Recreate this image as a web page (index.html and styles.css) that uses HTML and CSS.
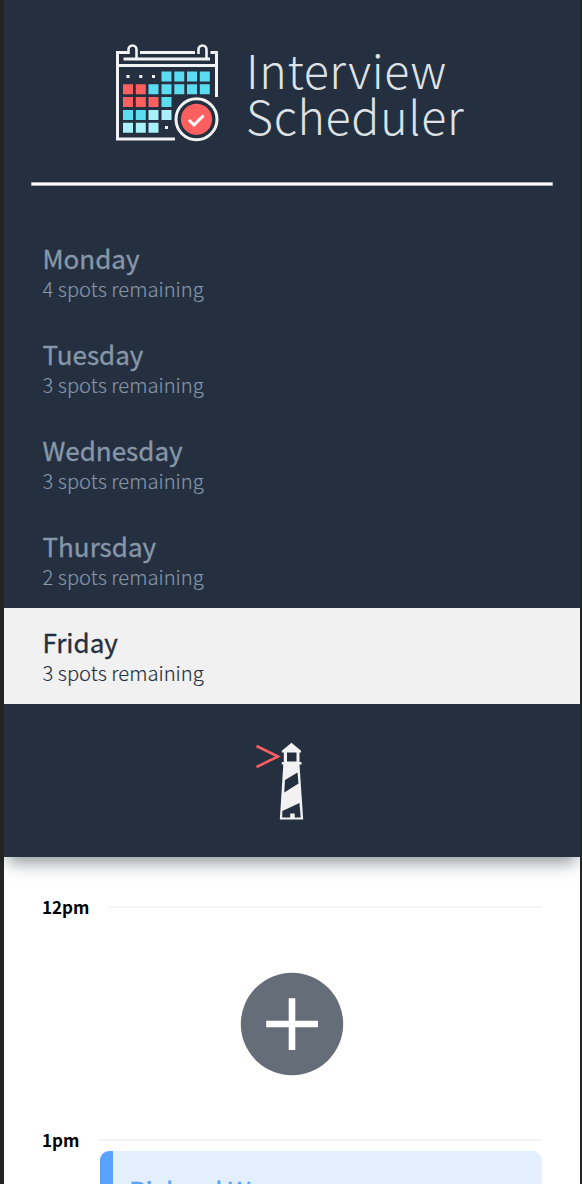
FILE: index.html
```
<!DOCTYPE html>
<html lang="en">
<head>
<meta charset="utf-8">
<title>Interview Scheduler</title>
<link rel="stylesheet" href="styles.css">
</head>
<body>
<div class="layout">
  <section class="sidebar">
    <header class="brand">
      <svg class="brand-icon" width="104" height="98" viewBox="0 0 104 98" fill="none">
        <g stroke="#f2f2f2" stroke-width="3">
          <path d="M14 8.5H2.500V95H60M25 8.500H80M95.500 8.500H101.500V53"/>
          <path d="M8.500 15H95M2 21.500H101"/>
          <path d="M13.500 10V5.500a4 4 0 0 1 8 0V15M83.500 10V5.500a4 4 0 0 1 8 0V15" stroke-width="2.600"/>
        </g>
        <path fill="#5bdcf0" d="M46.500 27.500h10v10h-10zM59.300 27.500h10v10h-10zM72 27.500h10v10h-10zM84.800 27.500h10v10h-10zM33.500 40.300h10v10h-10zM46.500 40.300h10v10h-10zM59.300 40.300h10v10h-10zM72 40.300h10v10h-10zM84.800 40.300h10v10h-10zM46.500 53h10v10h-10zM8 66h10v10h-10zM20.800 66h10v10h-10z"/>
        <path fill="#a9f1fa" d="M33.500 66h10v10h-10zM46.500 66h10v10h-10zM8 78.700h10v10h-10zM20.800 78.700h10v10h-10zM33.500 78.700h10v10h-10z"/>
        <path fill="#ff5f5f" d="M8 40.300h10v10h-10zM20.800 40.300h10v10h-10zM8 53h10v10h-10zM20.800 53h10v10h-10zM33.500 53h10v10h-10z"/>
        <path fill="#f2f2f2" d="M11.500 31h3v3h-3zM24.300 31h3v3h-3zM37 31h3v3h-3zM50 82h3v3h-3z"/>
        <circle cx="81.500" cy="75.300" r="20.500" fill="#242f40" stroke="#f2f2f2" stroke-width="3"/>
        <circle cx="81.500" cy="75.300" r="15.600" fill="#ff5f5f"/>
        <path d="M74 76l5 5 9.500-9.500" stroke="#fff" stroke-width="3"/>
      </svg>
      <h1 class="brand-name"><span class="brand-top">Interview</span><span class="brand-bottom">Scheduler</span></h1>
    </header>
    <hr class="separator">
    <ul class="days">
      <li class="day"><h2 class="day-name">Monday</h2><p class="spots">4 spots remaining</p></li>
      <li class="day"><h2 class="day-name">Tuesday</h2><p class="spots">3 spots remaining</p></li>
      <li class="day"><h2 class="day-name">Wednesday</h2><p class="spots">3 spots remaining</p></li>
      <li class="day"><h2 class="day-name">Thursday</h2><p class="spots">2 spots remaining</p></li>
      <li class="day day-selected"><h2 class="day-name">Friday</h2><p class="spots">3 spots remaining</p></li>
    </ul>
    <footer class="sidebar-footer">
      <svg class="lighthouse" width="48" height="79" viewBox="0 0 48 79" fill="none">
        <path d="M.5 4L22 14.500 .5 25" stroke="#fa5f63" stroke-width="2.600"/>
        <path fill="#f2f2f2" fill-rule="evenodd" d="M35.500 .8l9.500 8v1.700h-1.500v9.500h2v2.500h-2L47.200 77.500H23.800l3.500-55h-1.500V20h2v-9.500h-2V8.800zM31 10.500v9h9.500v-9zM29 38l12.500-7.500 1 11L28.300 50.500zM26.400 69L43.500 61l1.200 14.500h-6v-4h-4.500v4h-8z"/>
      </svg>
    </footer>
  </section>
  <main class="schedule">
    <article class="appointment">
      <header class="hour"><h4 class="time">12pm</h4><hr class="hour-line"></header>
      <div class="empty">
        <svg class="add" width="104" height="104" viewBox="0 0 104 104"><circle cx="52" cy="52" r="51.200" fill="#656d79"/><path d="M26.200 52H78M52 26.200V78" stroke="#fff" stroke-width="6.600"/></svg>
      </div>
    </article>
    <article class="appointment">
      <header class="hour"><h4 class="time">1pm</h4><hr class="hour-line"></header>
      <div class="card"><h2 class="student">Richard Wong</h2></div>
    </article>
  </main>
</div>
</body>
</html>
```
FILE: styles.css
```
* { box-sizing: border-box; margin: 0; padding: 0; }
body {
  height: 1184px;
  overflow: hidden;
  background: #fff;
  font-family: "Noto Sans CJK SC", "Noto Sans", sans-serif;
}
.layout {
  height: 1184px;
  border-left: 4px solid #242424;
  border-right: 2px solid #242424;
  overflow: hidden;
}
.sidebar {
  display: flex;
  flex-direction: column;
  height: 857px;
  background: #242f40;
  box-shadow: 0 9px 16px -4px rgba(30, 45, 50, .52);
}
.brand {
  display: flex;
  height: 182px;
  padding: 44px 0 0 111px;
}
.brand-icon { flex: none; }
.brand-name {
  padding: 2px 0 0 27px;
  color: #dfe2e5;
  font-size: 46.500px;
  font-weight: 300;
  line-height: 46px;
}
.brand-name span { display: block; white-space: nowrap; }
.brand-top { letter-spacing: .6px; }
.brand-bottom { letter-spacing: .7px; }
.separator {
  flex: none;
  height: 4px;
  margin: 0 27px;
  border: 1px solid #a9adb3;
  background: #fff;
}
.days { margin-top: 38px; list-style: none; }
.day {
  height: 96px;
  padding: 17px 38px 0 38.500px;
  color: #8697a8;
}
.day-selected { background: #f1f1f1; color: #242f40; }
.day-name {
  font-size: 26px;
  font-weight: 400;
  line-height: 34px;
  -webkit-text-stroke: .35px currentColor;
}
.spots {
  font-size: 20.200px;
  font-weight: 300;
  line-height: 28px;
  -webkit-text-stroke: .15px currentColor;
}
.sidebar-footer { padding: 38px 0 0 252px; }
.lighthouse { display: block; }
.hour {
  display: flex;
  align-items: center;
  gap: 19px;
  height: 28px;
  padding: 0 38px;
}
.time { font-size: 17px; font-weight: 700; line-height: 28px; }
.hour-line { flex: 1; height: 2px; border: 0; background: #f4f4f4; }
.schedule { padding-top: 36px; }
.empty { display: flex; justify-content: center; height: 205px; padding-top: 51px; }
.card {
  height: 120px;
  margin: -3px 38px 0 96px;
  padding: 22px 16px;
  border-left: 13px solid #5aa2fb;
  border-radius: 9px;
  background: #e3effc;
}
.student {
  color: #5aa2fb;
  font-size: 26px;
  font-weight: 400;
  line-height: 34px;
  -webkit-text-stroke: .35px currentColor;
}
```
